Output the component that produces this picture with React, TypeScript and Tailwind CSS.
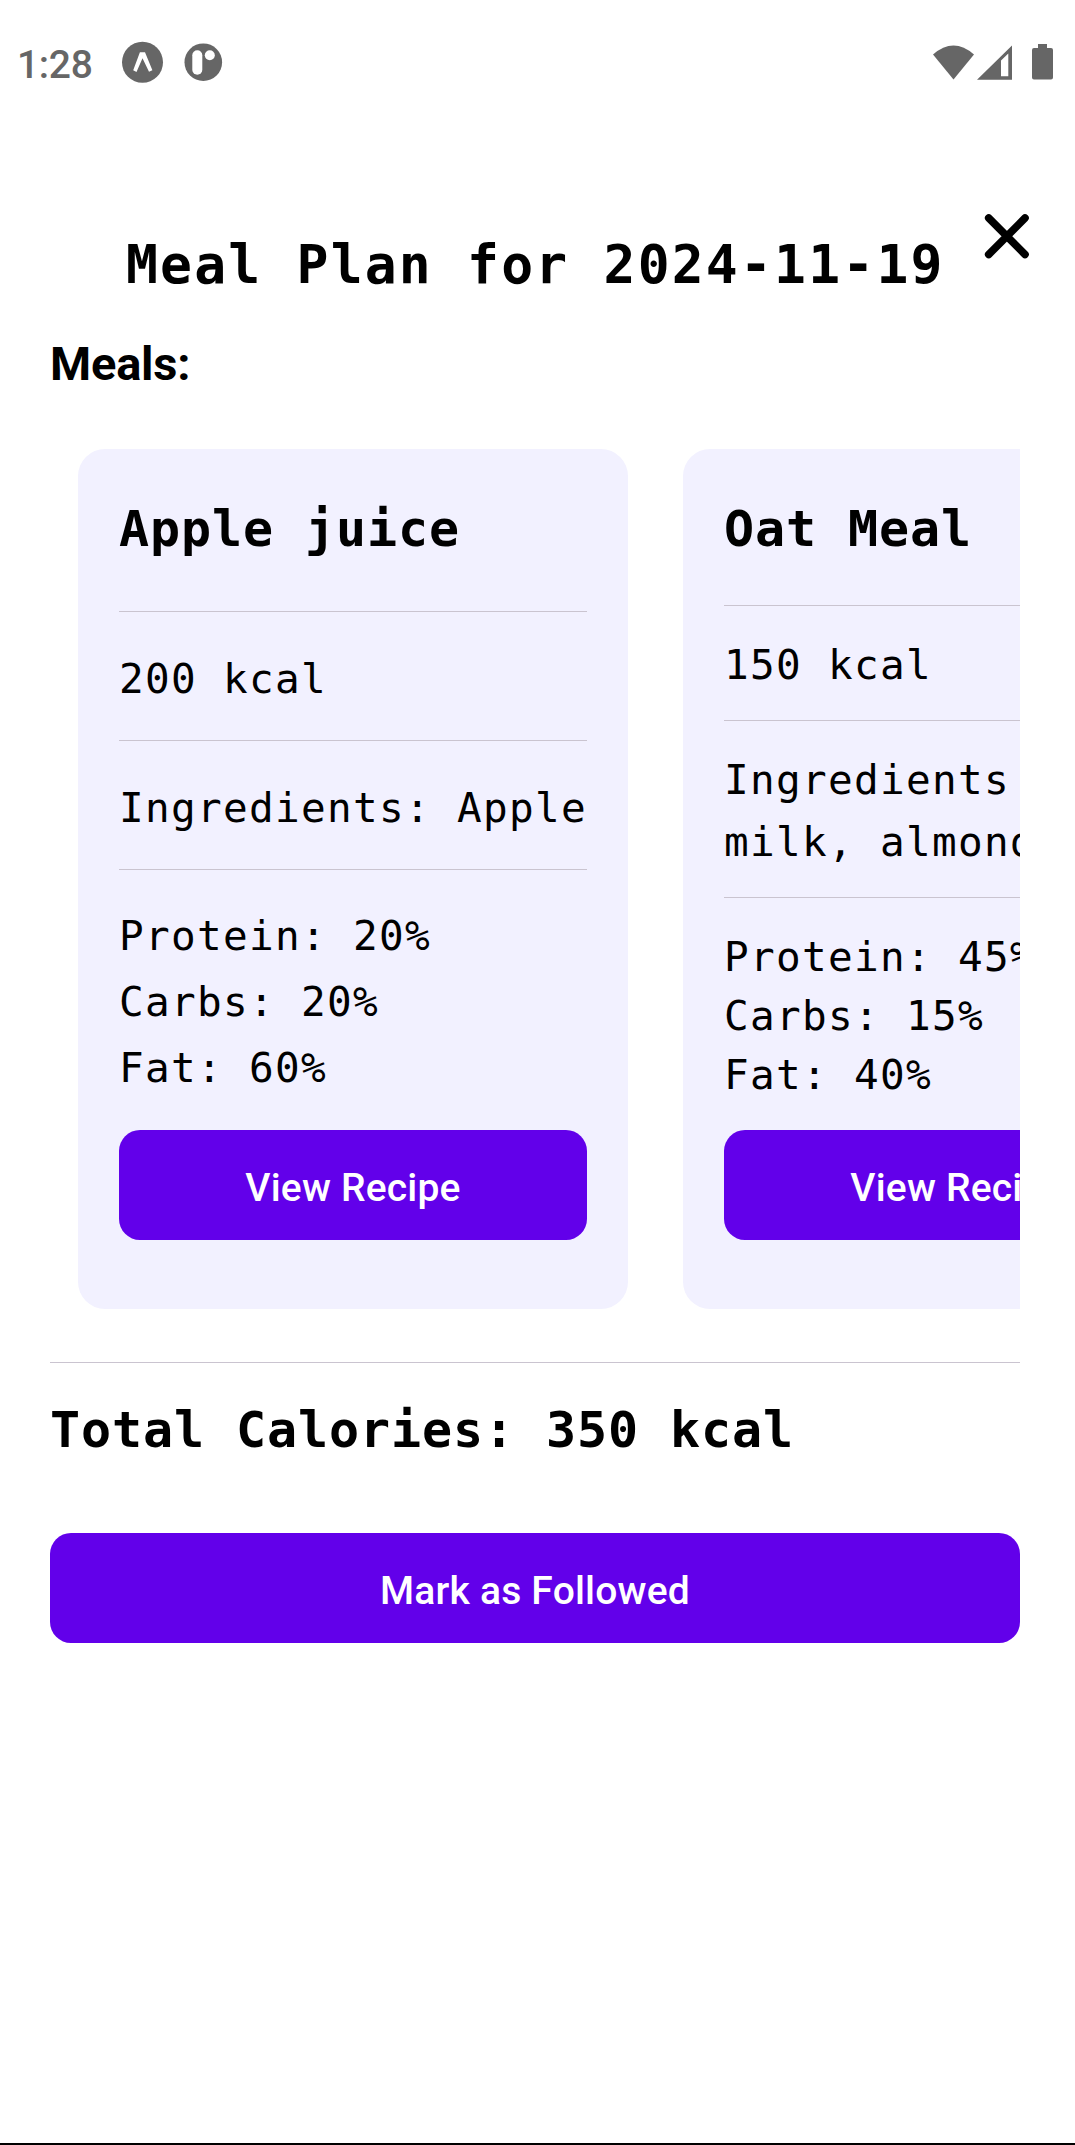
import React from "react";

const heading = "font-['DejaVu_Sans_Mono',monospace] font-bold whitespace-nowrap text-black";
const body = "font-['DejaVu_Sans_Mono',monospace] text-[41px] tracking-[1.32px] whitespace-nowrap text-black";

function StatusBar() {
  return (
    <header className="flex h-[125px] items-start justify-between pl-[17px] pr-[22px] pt-[41px] text-[#666]">
      <div className="flex items-start">
        <span className="mt-px w-[105px] font-[Roboto,sans-serif] text-[39px] font-medium leading-[46px] tracking-[-0.3px]">1:28</span>
        <svg className="h-[42px] w-[42px]" viewBox="0 0 42 42">
          <circle cx="20.5" cy="21.3" r="20.5" fill="#666" />
          <path d="M11.200 29.200 17.900 11.300H23L30.400 29.200 27 30.800 20.500 17.300 14.500 31Z" fill="#fff" />
        </svg>
        <svg className="ml-[19px] h-[42px] w-[42px]" viewBox="0 0 42 42">
          <circle cx="20.3" cy="21.2" r="18.8" fill="#666" />
          <rect x="9.3" y="9.2" width="10" height="24.6" rx="5" fill="#fff" />
          <circle cx="26.8" cy="14.2" r="5" fill="#fff" />
        </svg>
      </div>
      <svg className="h-[42px] w-[122px]" viewBox="931 41 122 42" fill="#666">
        <path d="M933 54.5Q953.500 36.500 974 54.500L953.500 79.500Z" />
        <path fillRule="evenodd" d="M977 79.700 1012 45.500V79.700ZM1001 60.500V76.300H1008.300V53.500Z" />
        <path d="M1038 44H1047V48H1051Q1053 48 1053 50V77.500Q1053 79.500 1051 79.500H1034Q1032 79.500 1032 77.500V50Q1032 48 1034 48H1038Z" />
      </svg>
    </header>
  );
}

function Divider({ className = "" }: { className?: string }) {
  return <div className={`h-px shrink-0 bg-[#cac4d0] ${className}`} />;
}

function Button({ children, className = "" }: { children: React.ReactNode; className?: string }) {
  return (
    <button
      className={`flex h-[110px] w-full shrink-0 items-center justify-center whitespace-nowrap rounded-[21px] bg-[#6200ea] pt-[7px] font-[Roboto,sans-serif] text-[39px] font-medium tracking-[0.2px] text-white ${className}`}
    >
      {children}
    </button>
  );
}

export default function App() {
  return (
    <div className="flex h-[2145px] w-[1075px] flex-col overflow-hidden border-b-2 border-black bg-white">
      <StatusBar />
      <main className="flex flex-col pl-[50px] pr-[55px]">
        <div className="flex h-[205px] items-start">
          <h1 className={`${heading} ml-[76px] mt-[110px] w-[857px] shrink-0 text-[53px] leading-[60px] tracking-[2.2px]`}>
            Meal Plan for 2024-11-19
          </h1>
          <button aria-label="Close" className="mt-[87px] shrink-0">
            <svg className="h-[48px] w-[48px]" viewBox="0 0 48 48" stroke="#000" strokeWidth="7.6" strokeLinecap="round">
              <path d="M5.700 6 42 42.500M42 6 5.700 42.500" />
            </svg>
          </button>
        </div>
        <h2 className="mt-[4px] h-[60px] font-[Roboto,sans-serif] text-[47px] font-bold leading-[60px] tracking-[-0.2px] text-black">Meals:</h2>

        <section className="mt-[55px] flex h-[860px] gap-[55px] overflow-hidden pl-[28px]">
          <article className="flex h-[860px] w-[550px] shrink-0 flex-col rounded-[27px] bg-[#f2f1ff] px-[41px] pt-[50px]">
            <h3 className={`${heading} text-[50px] leading-[60px] tracking-[0.9px]`}>Apple juice</h3>
            <Divider className="mt-[52px]" />
            <p className={`${body} mt-[34px] leading-[66px]`}>200 kcal</p>
            <Divider className="mt-[28px]" />
            <p className={`${body} mt-[34px] leading-[66px]`}>Ingredients: Apple</p>
            <Divider className="mt-[28px]" />
            <div className={`${body} mt-[33px] leading-[66px]`}>
              <p>Protein: 20%</p>
              <p>Carbs: 20%</p>
              <p>Fat: 60%</p>
            </div>
            <Button className="mt-[29px]">View Recipe</Button>
          </article>
          <article className="flex h-[860px] w-[550px] shrink-0 flex-col rounded-[27px] bg-[#f2f1ff] px-[41px] pt-[50px]">
            <h3 className={`${heading} text-[50px] leading-[60px] tracking-[0.9px]`}>Oat Meal</h3>
            <Divider className="mt-[46px]" />
            <p className={`${body} mt-[28px] leading-[62px]`}>150 kcal</p>
            <Divider className="mt-[24px]" />
            <div className={`${body} mt-[28px] leading-[62px]`}>
              <p>Ingredients<span className="pl-[3px]">:</span></p>
              <p>milk, almond</p>
            </div>
            <Divider className="mt-[24px]" />
            <div className={`${body} mt-[30px] leading-[59px]`}>
              <p>Protein: 45%</p>
              <p>Carbs: 15%</p>
              <p>Fat: 40%</p>
            </div>
            <Button className="mt-[25px]">View Recipe</Button>
          </article>
        </section>

        <Divider className="mt-[53px]" />
        <h3 className={`${heading} mt-[37px] text-[50px] leading-[60px] tracking-[0.9px]`}>Total Calories: 350 kcal</h3>
        <Button className="mt-[73px]">Mark as Followed</Button>
      </main>
    </div>
  );
}
